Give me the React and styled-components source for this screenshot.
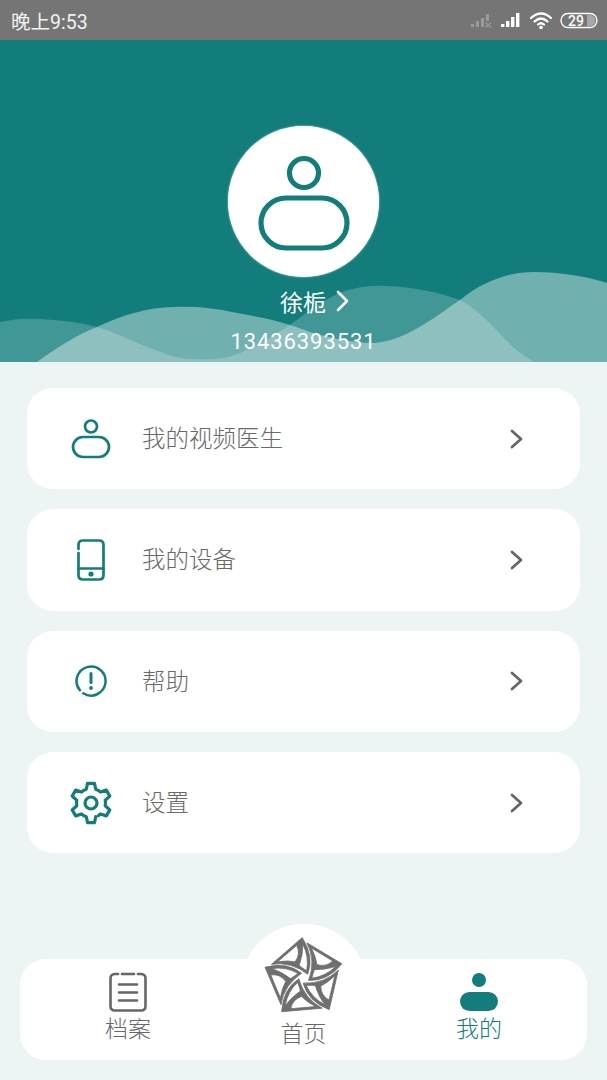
import React from "react";
import styled, { createGlobalStyle } from "styled-components";

const Global = createGlobalStyle`
  html, body { margin: 0; padding: 0; background: #ecf5f3; }
  * { box-sizing: border-box; }
`;
const TEAL = "#127d7b";
const GREY = "#696969";
const FONT = `Roboto, "Noto Sans CJK SC", sans-serif`;

const Page = styled.div`
  width: 607px; height: 1080px; display: flex; flex-direction: column;
  background: #ecf5f3; font-family: ${FONT}; overflow: hidden;
`;
const StatusBar = styled.div`
  height: 40px; flex: none; background: #757575; display: flex; align-items: center;
  justify-content: space-between; padding: 0 8px 0 11px; color: #f2f2f2; font-size: 19.5px; font-weight: 400;
`;
const StatusIcons = styled.svg`width: 130px; height: 24px; display: block;`;
const Header = styled.header`
  position: relative; height: 322px; flex: none; background: ${TEAL}; overflow: hidden;
  display: flex; flex-direction: column; align-items: center; padding-top: 86px; color: #fff;
`;
const Waves = styled.svg`position: absolute; left: 0; bottom: 0; width: 607px; height: 100px;`;
const Avatar = styled.div`
  position: relative; width: 151px; height: 151px; border-radius: 50%; background: #fff;
  box-shadow: 0 0 2px 0 rgba(255,255,255,.8); display: flex; align-items: center; justify-content: center;
`;
const AvatarGlyph = styled.svg`margin-top: 7px; display: block;`;
const Name = styled.div`
  position: relative; margin-top: 8px; height: 32px; display: flex; align-items: center; gap: 10px;
  font-size: 23px; font-weight: 400; margin-left: 22px;
`;
const Phone = styled.div`
  position: relative; margin-top: 9px; font-size: 22px; font-weight: 400; letter-spacing: .9px; line-height: 32px;
`;
const List = styled.main`
  display: flex; flex-direction: column; gap: 20px; padding: 26px 27px 0;
`;
const Card = styled.div`
  height: 101.3px; border-radius: 26px; background: #fff; display: flex; align-items: center; padding: 0 57px 0 41px;
`;
const IconSlot = styled.div`width: 46px; height: 46px; flex: none; display: flex; align-items: center; justify-content: center;`;
const Label = styled.span`
  flex: 1; margin-left: 28px; margin-bottom: 3px; font-size: 23.5px; font-weight: 300; color: ${GREY};
`;
const TabBar = styled.nav`
  position: relative; margin: auto 20px 20px; height: 101px; border-radius: 26px; background: #fff;
  display: grid; grid-template-columns: 216px 135px 216px;
`;
const Bump = styled.div`
  position: absolute; left: 219.5px; top: -35px; width: 128px; height: 128px; border-radius: 50%; background: #fff;
`;
const Tab = styled.div`
  position: relative; display: flex; flex-direction: column; align-items: center;
  padding-top: ${p => p.$center ? 0 : 13}px; color: ${p => p.$active ? TEAL : GREY};
  font-size: 23px; font-weight: 300; line-height: 30px;
`;
const TabLabel = styled.span`margin-top: ${p => p.$mt}px;`;
const LogoSvg = styled.svg`margin-top: -23px; display: block;`;

const Chevron = ({ color = "#666", h = 20, w = 13, sw = 2.8 }) => (
  <svg width={w} height={h} viewBox={`0 0 ${w} ${h}`} fill="none" stroke={color} strokeWidth={sw} strokeLinecap="round" strokeLinejoin="round">
    <path d={`M2 2 L${w - 2} ${h / 2} L2 ${h - 2}`} />
  </svg>
);

const PersonIcon = ({ size = 40 }) => (
  <svg width={size} height={size} viewBox="0 0 40 40" fill="none" stroke={TEAL} strokeWidth="2.7">
    <circle cx="20" cy="7.5" r="6" />
    <rect x="2" y="18" width="36" height="20" rx="10" />
  </svg>
);
const DeviceIcon = () => (
  <svg width="30" height="42" viewBox="0 0 30 42" fill="none" stroke={TEAL} strokeWidth="2.7" strokeLinecap="round">
    <path d="M2.5 10 V6 Q2.5 1.5 7 1.5 H23 Q27.5 1.5 27.5 6 V36 Q27.5 40.5 23 40.5 H7 Q2.5 40.5 2.5 36 V14" />
    <path d="M2.5 29.5 H27.5" />
    <circle cx="15" cy="35" r="2.6" fill={TEAL} stroke="none" />
  </svg>
);
const AlertIcon = () => (
  <svg width="34" height="34" viewBox="0 0 34 34" fill="none" stroke={TEAL} strokeWidth="2.5" strokeLinecap="round">
    <path d="M5.9 26.3 A14.5 14.5 0 1 1 9.3 29.3" />
    <path d="M17 9.5 V18.5" strokeWidth="3" />
    <circle cx="17" cy="24" r="1.9" fill={TEAL} stroke="none" />
  </svg>
);
const gearPath = (() => {
  const R = 20, r = 14.5, c = 22;
  const pt = (rad, deg) => {
    const a = (deg * Math.PI) / 180;
    return `${(c + rad * Math.cos(a)).toFixed(2)} ${(c + rad * Math.sin(a)).toFixed(2)}`;
  };
  let d = `M${pt(r, 71)}`;
  for (let i = 0; i < 6; i++) {
    const t = 90 + i * 60;
    d += ` L${pt(R, t - 10)} L${pt(R, t + 10)} L${pt(r, t + 19)}`;
    d += ` A${r} ${r} 0 0 1 ${pt(r, i === 5 ? t + 30 : t + 41)}`;
  }
  return d;
})();
const GearIcon = () => (
  <svg width="44" height="44" viewBox="0 0 44 44" fill="none" stroke={TEAL} strokeWidth="3.2" strokeLinecap="round" strokeLinejoin="round">
    <path d={gearPath} />
    <circle cx="22" cy="22" r="6" />
  </svg>
);
const LogoMark = () => (
  <LogoSvg width="84" height="84" viewBox="-40 -40 80 80" fill="#6f6f6f" stroke="#6f6f6f" strokeWidth=".7" strokeLinejoin="round">
    {[0, 72, 144, 216, 288].map(a => (
      <path
        key={a}
        transform={`rotate(${a})`}
        fillRule="evenodd"
        d="M-1.7 -38.5 L-31 -13 Q-12 -16 3.5 -3.5 Q10 -20 -1.7 -38.5 Z
           M-7 -31 L-25 -15.5 Q-15 -17 -8.5 -15.5 Q-3 -23 -7 -31 Z
           M-1 -32 Q5 -20 2.5 -7 Q-1 -9 -4.5 -12 Q-1 -22 -1 -32 Z"
      />
    ))}
  </LogoSvg>
);
const DocIcon = () => (
  <svg width="38" height="40" viewBox="0 0 38 40" fill="none" stroke="#666" strokeWidth="2.6" strokeLinecap="round">
    <path d="M9 2 H6 Q1.5 2 1.5 6.5 V34 Q1.5 38.5 6 38.5 H32 Q36.5 38.5 36.5 34 V6.5 Q36.5 2 32 2 H29" />
    <path d="M13 2 H25 M10 12.5 H28 M10 20.5 H28 M10 28.5 H28" />
  </svg>
);
const MeIcon = () => (
  <svg width="38" height="40" viewBox="0 0 38 40" fill={TEAL}>
    <circle cx="19" cy="8" r="7" />
    <rect x="0" y="20" width="38" height="19" rx="9.5" />
  </svg>
);

const items = [
  { label: "我的视频医生", icon: <PersonIcon /> },
  { label: "我的设备", icon: <DeviceIcon /> },
  { label: "帮助", icon: <AlertIcon /> },
  { label: "设置", icon: <GearIcon /> },
];

export default function App() {
  return (
    <Page>
      <Global />
      <StatusBar>
        <span>晚上9:53</span>
        <StatusIcons viewBox="0 0 130 24" fill="none">
          <g fill="#9a9a9a">
            <rect x="2" y="16" width="3" height="3" /><rect x="7" y="13" width="3" height="6" />
            <rect x="12" y="10" width="3" height="9" /><rect x="17" y="6" width="3" height="7" />
          </g>
          <path d="M16.5 14.5 L22 19.5 M22 14.5 L16.5 19.5" stroke="#9a9a9a" strokeWidth="1.5" />
          <g fill="#fff">
            <rect x="32" y="16" width="3.4" height="3" /><rect x="37" y="13" width="3.4" height="6" />
            <rect x="42" y="9" width="3.4" height="10" /><rect x="47" y="5" width="3.4" height="14" />
          </g>
          <g stroke="#fff" strokeWidth="2.2" strokeLinecap="round">
            <path d="M62 10 Q72 1 82 10" /><path d="M65.5 13.5 Q72 7.5 78.5 13.5" /><path d="M69 16.5 Q72 14 75 16.5" />
          </g>
          <circle cx="72" cy="19.5" r="1.8" fill="#fff" />
          <rect x="92" y="5.5" width="36" height="14" rx="7" stroke="#fff" strokeWidth="1.4" />
          <path d="M118 7 H121 A5.5 5.5 0 0 1 121 18 H118 Z" fill="#a8a8a8" />
          <text x="107" y="17.5" textAnchor="middle" fill="#fff" fontSize="14" fontWeight="500" fontFamily="Roboto, sans-serif">29</text>
        </StatusIcons>
      </StatusBar>
      <Header>
        <Waves viewBox="0 262 607 100" preserveAspectRatio="none">
          <path d="M0 322 C13 319 26 318 39 319 C60 320 78 322 97 327 C118 333 135 343 155 350 C170 356 180 359 193 359 C212 360 226 359 240 353 C258 346 274 335 290 325 C310 310 328 296 348 290 C362 286 375 285 387 286 C412 287 438 292 460 300 C476 308 490 323 503 337 C514 349 524 356 534 362 L0 362 Z" fill="#fff" fillOpacity=".2" />
          <path d="M37 362 C55 349 76 335 97 327 C120 316 147 307 174 307 C195 306 214 308 232 312 C252 316 272 319 290 325 C305 330 318 335 329 337 C345 341 360 343 375 343 C394 341 410 333 426 323 C438 316 449 307 460 300 C482 282 508 272 534 272 C560 272 585 276 607 283 L607 362 Z" fill="#fff" fillOpacity=".4" />
        </Waves>
        <Avatar>
          <AvatarGlyph width="100" height="104" viewBox="0 0 100 104" fill="none" stroke={TEAL} strokeWidth="5.2">
            <ellipse cx="50" cy="20" rx="14.5" ry="14.5" />
            <rect x="7" y="45" width="86" height="50" rx="25" />
          </AvatarGlyph>
        </Avatar>
        <Name>徐栀 <Chevron color="#fff" w={13} h={22} sw={2.6} /></Name>
        <Phone>13436393531</Phone>
      </Header>
      <List>
        {items.map(it => (
          <Card key={it.label}>
            <IconSlot>{it.icon}</IconSlot>
            <Label>{it.label}</Label>
            <Chevron />
          </Card>
        ))}
      </List>
      <TabBar>
        <Bump />
        <Tab><DocIcon /><TabLabel $mt={3}>档案</TabLabel></Tab>
        <Tab $center><LogoMark /><TabLabel $mt={0}>首页</TabLabel></Tab>
        <Tab $active><MeIcon /><TabLabel $mt={3}>我的</TabLabel></Tab>
      </TabBar>
    </Page>
  );
}
